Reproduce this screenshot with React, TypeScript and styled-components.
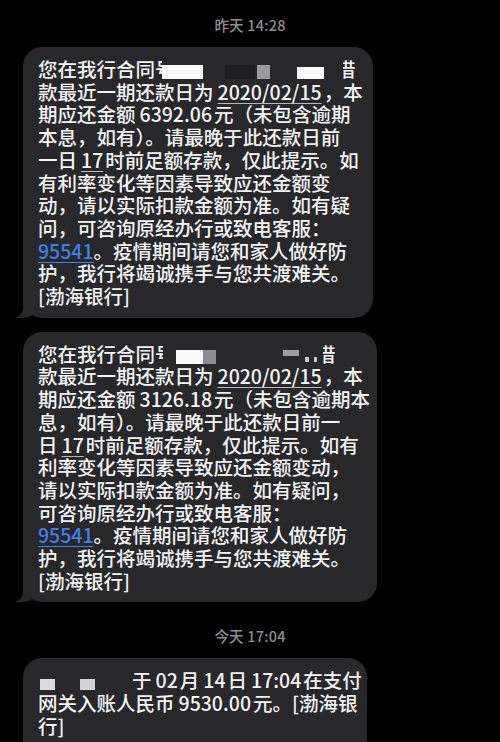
import React from "react";
import styled, { createGlobalStyle } from "styled-components";

const GlobalStyle = createGlobalStyle`
  html, body {
    margin: 0;
    padding: 0;
    background: #000;
    height: 742px;
    overflow: hidden;
  }
  body {
    font-family: "Noto Sans CJK SC", "Noto Sans", sans-serif;
    -webkit-font-smoothing: antialiased;
  }
`;

const Thread = styled.main`
  width: 500px;
  padding: 15px 0 0 23px;
  box-sizing: border-box;
  display: flex;
  flex-direction: column;
  align-items: flex-start;
`;

const Stamp = styled.div<{ $gap?: number }>`
  align-self: stretch;
  margin-left: -23px;
  margin-top: ${(p) => p.$gap ?? 0}px;
  margin-bottom: 12px;
  text-align: center;
  font-size: 14.5px;
  font-weight: 500;
  line-height: 20px;
  color: #8d8d92;
  letter-spacing: 0.2px;
`;

const BUBBLE = "#28282b";

const Bubble = styled.div<{ $width: number; $tail?: boolean; $gap?: number }>`
  position: relative;
  width: ${(p) => p.$width}px;
  box-sizing: border-box;
  margin-top: ${(p) => p.$gap ?? 0}px;
  padding: 11px 10px 10px 15px;
  background: ${BUBBLE};
  border-radius: 19px;
  color: #f4f4f6;
  font-size: 19.5px;
  font-weight: 500;
  line-height: 22.7px;

  ${(p) =>
    p.$tail &&
    `
    &::before {
      content: "";
      position: absolute;
      left: -7px;
      bottom: 0;
      width: 22px;
      height: 22px;
      background: ${BUBBLE};
      border-bottom-right-radius: 16px 14px;
    }
    &::after {
      content: "";
      position: absolute;
      left: -26px;
      bottom: 0;
      width: 26px;
      height: 22px;
      background: #000;
      border-bottom-right-radius: 10px;
    }
  `}
`;

const Line = styled.div`
  position: relative;
  z-index: 1;
  white-space: nowrap;
`;

const Num = styled.span<{ $mark?: boolean }>`
  margin: 0 2px 0 4px;
  ${(p) =>
    p.$mark &&
    `
    text-decoration: underline;
    text-decoration-color: #b8b8bc;
    text-decoration-thickness: 1px;
    text-underline-offset: 3px;
  `}
`;

const Phone = styled.span`
  color: #3f7fe6;
  text-decoration: underline;
  text-decoration-thickness: 1px;
  text-underline-offset: 3px;
`;

const Redact = styled.span<{ $w: number; $h?: number; $c?: string; $ml?: number; $up?: number }>`
  display: inline-block;
  width: ${(p) => p.$w}px;
  height: ${(p) => p.$h ?? 14}px;
  margin-left: ${(p) => p.$ml ?? 0}px;
  background: ${(p) => p.$c ?? "#fafafa"};
  vertical-align: ${(p) => p.$up ?? -2}px;
`;

const Clip = styled.span<{ $w: number; $shift?: number; $ml?: number; $c?: string }>`
  display: inline-block;
  width: ${(p) => p.$w}px;
  margin-left: ${(p) => p.$ml ?? 0}px;
  overflow: hidden;
  vertical-align: bottom;
  color: ${(p) => p.$c ?? "inherit"};

  & > span {
    display: inline-block;
    margin-left: ${(p) => -(p.$shift ?? 0)}px;
  }
`;

const Gap = styled.span<{ $w: number }>`
  display: inline-block;
  width: ${(p) => p.$w}px;
`;

export default function App() {
  return (
    <>
      <GlobalStyle />
      <Thread>
        <Stamp>昨天 14:28</Stamp>

        <Bubble $width={350} $tail>
          <Line>
            您在我行合同
            <Clip $w={7}><span>号</span></Clip>
            <Redact $w={41} />
            <Redact $w={30} $ml={22} $c="#1f1f22" />
            <Redact $w={13} $ml={2} $c="#9b9ba1" />
            <Redact $w={27} $ml={27} $h={12} />
            <Clip $w={12} $ml={19} $shift={7}><span>借</span></Clip>
          </Line>
          <Line>
            款最近一期还款日为<Num $mark>2020/02/15</Num>，本
          </Line>
          <Line>
            期应还金额<Num>6392.06</Num>元（未包含逾期
          </Line>
          <Line>本息，如有）。请最晚于此还款日前</Line>
          <Line>
            一日<Num $mark>17</Num>时前足额存款，仅此提示。如
          </Line>
          <Line>有利率变化等因素导致应还金额变</Line>
          <Line>动，请以实际扣款金额为准。如有疑</Line>
          <Line>问，可咨询原经办行或致电客服：</Line>
          <Line>
            <Phone>95541</Phone>。疫情期间请您和家人做好防
          </Line>
          <Line>护，我行将竭诚携手与您共渡难关。</Line>
          <Line>[渤海银行]</Line>
        </Bubble>

        <Bubble $width={354} $tail $gap={14}>
          <Line>
            您在我行合同
            <Clip $w={8}><span>号</span></Clip>
            <Redact $w={27} $ml={13} />
            <Redact $w={13} $c="#8c8c92" />
            <Redact $w={16} $ml={67} $h={6} $up={6} $c="#9d9da2" />
            <Redact $w={4} $ml={6} $h={5} $up={0} $c="#c8c8cc" />
            <Redact $w={3} $ml={5} $h={5} $up={0} $c="#c8c8cc" />
            <Gap $w={6} />
            <Clip $w={12} $shift={7}><span>借</span></Clip>
          </Line>
          <Line>
            款最近一期还款日为<Num $mark>2020/02/15</Num>，本
          </Line>
          <Line>
            期应还金额<Num>3126.18</Num>元（未包含逾期本
          </Line>
          <Line>息，如有）。请最晚于此还款日前一</Line>
          <Line>
            日<Num $mark>17</Num>时前足额存款，仅此提示。如有
          </Line>
          <Line>利率变化等因素导致应还金额变动，</Line>
          <Line>请以实际扣款金额为准。如有疑问，</Line>
          <Line>可咨询原经办行或致电客服：</Line>
          <Line>
            <Phone>95541</Phone>。疫情期间请您和家人做好防
          </Line>
          <Line>护，我行将竭诚携手与您共渡难关。</Line>
          <Line>[渤海银行]</Line>
        </Bubble>

        <Stamp $gap={24}>今天 17:04</Stamp>

        <Bubble $width={344} $tail>
          <Line>
            <Redact $w={15} $h={11} $ml={2} $c="#dcdcdf" />
            <Redact $w={15} $h={11} $ml={25} $c="#d2d2d6" />
            <Gap $w={37} />于<Num>02</Num>月<Num>14</Num>日<Num>17:04</Num>在支付
          </Line>
          <Line>
            网关入账人民币<Num>9530.00</Num>元。[渤海银
          </Line>
          <Line>行]</Line>
          <Line>&nbsp;</Line>
        </Bubble>
      </Thread>
    </>
  );
}
